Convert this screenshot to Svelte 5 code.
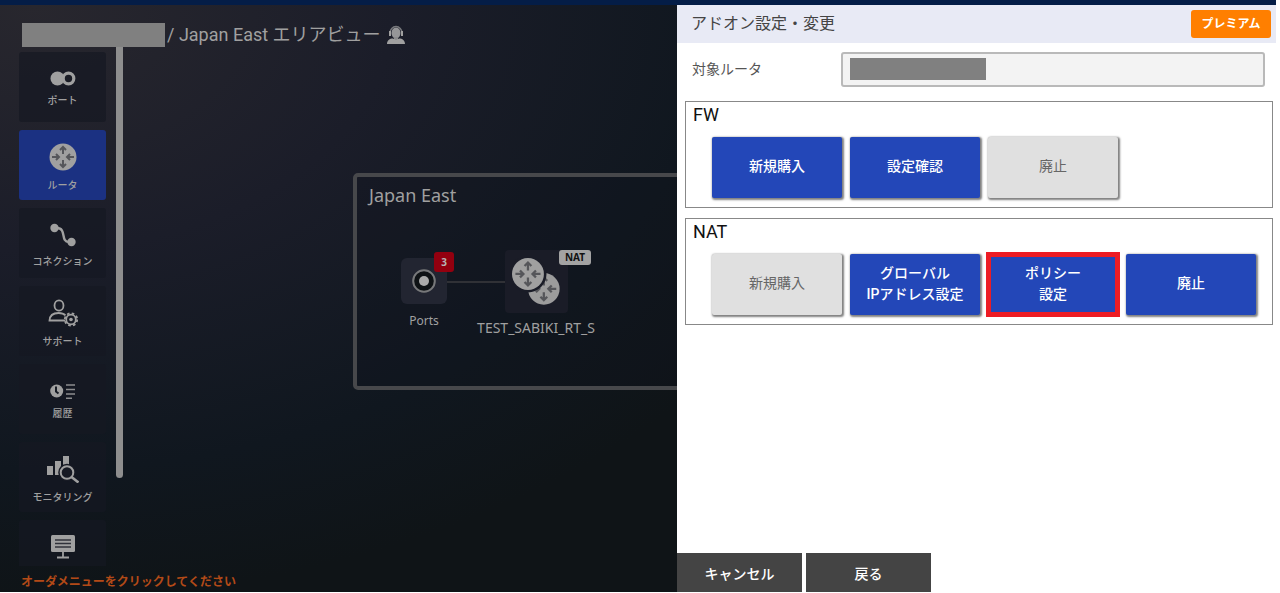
<script>
  let active = $state('router');

  const menu = [
    { id: 'port', label: 'ポート' },
    { id: 'router', label: 'ルータ' },
    { id: 'connection', label: 'コネクション' },
    { id: 'support', label: 'サポート' },
    { id: 'history', label: '履歴' },
    { id: 'monitoring', label: 'モニタリング' },
    { id: 'board', label: '' }
  ];

  const groups = [
    {
      name: 'FW',
      buttons: [
        { lines: ['新規購入'] },
        { lines: ['設定確認'] },
        { lines: ['廃止'], disabled: true }
      ]
    },
    {
      name: 'NAT',
      buttons: [
        { lines: ['新規購入'], disabled: true },
        { lines: ['グローバル', 'IPアドレス設定'] },
        { lines: ['ポリシー', '設定'], marked: true },
        { lines: ['廃止'] }
      ]
    }
  ];
</script>

{#snippet arrows()}
  <g fill="none" stroke="#55565a" stroke-width="2">
    <path d="M14 11V4M11 7l3-3 3 3M14 17v7M11 21l3 3 3-3" />
    <path d="M3 14h7M7 11l3 3-3 3M25 14h-7M21 11l-3 3 3 3" />
  </g>
{/snippet}

{#snippet icon(id)}
  {#if id === 'port'}
    <svg width="26" height="15" viewBox="0 0 26 15">
      <circle cx="7.5" cy="7.5" r="7" fill="#a0a0a0" />
      <circle cx="18.5" cy="7.5" r="5.3" fill="#1a1c25" stroke="#a0a0a0" stroke-width="3.2" />
    </svg>
  {:else if id === 'router'}
    <svg width="28" height="28" viewBox="0 0 28 28">
      <circle cx="14" cy="14" r="13.5" fill="#a0a0a0" />
      {@render arrows()}
    </svg>
  {:else if id === 'connection'}
    <svg width="26" height="24" viewBox="0 0 26 24">
      <path d="M4 5h3c10 0 3 14 12 14h3" fill="none" stroke="#a0a0a0" stroke-width="2.4" />
      <circle cx="4.5" cy="5" r="4.2" fill="#a0a0a0" />
      <circle cx="21.5" cy="19" r="4.2" fill="#a0a0a0" />
    </svg>
  {:else if id === 'support'}
    <svg width="30" height="28" viewBox="0 0 30 28">
      <g fill="none" stroke="#a0a0a0">
        <ellipse cx="11" cy="6.5" rx="4.5" ry="5.2" stroke-width="1.8" />
        <path d="M17 21.500H1.500c.3-5 4-7.500 9-7.500 3 0 5.500.8 7 2.300" stroke-width="1.8" />
        <circle cx="23" cy="20.500" r="4.8" stroke-width="1.8" />
        <circle cx="23" cy="20.500" r="6.200" stroke-width="1.800" stroke-dasharray="2.600 2.270" />
      </g>
      <circle cx="23" cy="20.500" r="1.800" fill="#a0a0a0" />
    </svg>
  {:else if id === 'history'}
    <svg width="26" height="16" viewBox="0 0 26 16">
      <circle cx="6.7" cy="8" r="6.5" fill="#a0a0a0" />
      <path d="M6 3.500V8.500l2.500 2" fill="none" stroke="#171b24" stroke-width="2" />
      <path d="M16 2h9M16 6.500h9M16 11h9M16 15.200h6" stroke="#8c8c8e" stroke-width="1.5" />
    </svg>
  {:else if id === 'monitoring'}
    <svg width="32" height="28" viewBox="0 0 32 28">
      <path d="M0 11h6v9H0zM8 6h6v14H8zM16 1h6v9h-6z" fill="#a0a0a0" />
      <circle cx="20" cy="17.5" r="6.3" fill="#171a24" stroke="#171a24" stroke-width="5" />
      <circle cx="20" cy="17.5" r="6.3" fill="none" stroke="#a0a0a0" stroke-width="2" />
      <path d="M24.500 22l7 5.500" stroke="#a0a0a0" stroke-width="2.6" />
    </svg>
  {:else}
    <svg width="24" height="24" viewBox="0 0 24 24">
      <rect width="24" height="17" rx="1.5" fill="#a0a0a0" />
      <path d="M4 5h16M4 8.500h16M4 12h16" stroke="#30323a" stroke-width="1.6" />
      <path d="M12 17v5M6 22.500h12" stroke="#a0a0a0" stroke-width="1.8" />
    </svg>
  {/if}
{/snippet}

<div class="app">
  <div class="topbar"></div>

  <main class="map">
    <header class="title">
      <span class="masked"></span>
      <h1>/ Japan East エリアビュー</h1>
      <svg class="agent" width="18" height="20" viewBox="0 0 18 20">
        <ellipse cx="9" cy="8" rx="4.5" ry="5.5" fill="#969698" />
        <path d="M3 8a6 6.500 0 0 1 12 0" fill="none" stroke="#77787c" stroke-width="1.5" />
        <path d="M2 6h2v5H2zM14 6h2v5h-2z" fill="#a0a0a0" />
        <path d="M7 12h4v4H7z" fill="#8a8a8c" />
        <path d="M0 19c0-3.500 2.500-5.500 6-5.500l3 1.500 3-1.500c3.500 0 6 2 6 5.500z" fill="#a0a0a0" />
      </svg>
    </header>

    <div class="body">
      <nav class="menu">
        {#each menu as item (item.id)}
          <button
            class="tile"
            class:active={active === item.id}
            aria-label={item.label || null}
            onclick={() => (active = item.id)}
          >
            {@render icon(item.id)}
            <span>{item.label}</span>
          </button>
        {/each}
      </nav>
      <div class="track"><div class="thumb"></div></div>

      <div class="canvas">
        <section class="area">
          <h2>Japan East</h2>
          <div class="link"></div>

          <div class="node ports">
            <div class="box">
              <svg width="24" height="24" viewBox="0 0 24 24">
                <circle cx="12" cy="12" r="10.8" fill="#0e1215" stroke="#77787a" stroke-width="2" />
                <circle cx="12" cy="12" r="5" fill="#aaa" />
              </svg>
            </div>
            <span class="count">3</span>
            <p>Ports</p>
          </div>

          <div class="node router">
            <div class="box">
              <svg width="48" height="48" viewBox="0 0 48 48">
                <g transform="translate(16 15) scale(1.13)">
                  <circle cx="14" cy="14" r="14" fill="#9c9c9c" />
                  {@render arrows()}
                </g>
                <circle cx="16" cy="16" r="18.5" fill="#1a1c27" />
                <g transform="scale(1.14)">
                  <circle cx="14" cy="14" r="14" fill="#a0a0a0" />
                  {@render arrows()}
                </g>
              </svg>
            </div>
            <span class="tag">NAT</span>
            <p>TEST_SABIKI_RT_S</p>
          </div>
        </section>
      </div>
    </div>

    <p class="hint">オーダメニューをクリックしてください</p>
  </main>

  <aside class="panel">
    <header class="panel-head">
      <h2>アドオン設定・変更</h2>
      <span class="premium">プレミアム</span>
    </header>

    <div class="field">
      <label for="target">対象ルータ</label>
      <div class="control">
        <input id="target" type="text" readonly />
        <span class="mask"></span>
      </div>
    </div>

    {#each groups as group (group.name)}
      <section class="group">
        <h3>{group.name}</h3>
        <div class="buttons">
          {#each group.buttons as button}
            <button class="action" class:marked={button.marked} disabled={button.disabled}>
              {#each button.lines as line}
                <span>{line}</span>
              {/each}
            </button>
          {/each}
        </div>
      </section>
    {/each}

    <footer>
      <button>キャンセル</button>
      <button>戻る</button>
    </footer>
  </aside>
</div>

<style>
  :global(body) {
    margin: 0;
    background: #fff;
    font-family: Roboto, 'Noto Sans CJK JP', sans-serif;
  }

  h1,
  h2,
  h3,
  p {
    margin: 0;
    font-weight: 400;
  }

  button {
    padding: 0;
    border: none;
    font-family: inherit;
    cursor: pointer;
  }

  .app {
    box-sizing: border-box;
    display: grid;
    grid-template-columns: minmax(0, 1fr) 599px;
    grid-template-rows: 5px minmax(0, 1fr);
    height: 100vh;
    padding: 0 4px 1px 0;
  }

  .topbar {
    grid-column: 1 / -1;
    background: #041d47;
  }

  /* left side: area map */
  .map {
    display: flex;
    flex-direction: column;
    overflow: hidden;
    background: radial-gradient(ellipse 140% 110% at 5% 0%, #28272e 0%, #1b1d29 38%, #10171f 72%, #0f1417 92%);
    color: #a0a0a0;
  }

  .title {
    display: flex;
    align-items: center;
    height: 24px;
    padding: 18px 0 0 22px;
  }

  .title h1 {
    margin: 0 6px 0 2px;
    font-size: 18px;
    line-height: 24px;
    white-space: nowrap;
  }

  .masked {
    width: 143px;
    height: 24px;
    background: #808080;
  }

  .body {
    display: flex;
    flex: 1;
    min-height: 0;
  }

  .menu {
    display: flex;
    flex-direction: column;
    gap: 8px;
    width: 87px;
    padding: 5px 10px 0 19px;
    overflow: hidden;
  }

  .tile {
    box-sizing: border-box;
    display: flex;
    flex: 0 0 70px;
    flex-direction: column;
    align-items: center;
    justify-content: center;
    gap: 8px;
    padding-top: 5px;
    border-radius: 3px;
    background: rgba(22, 24, 34, 0.7);
    color: #a0a0a0;
    font-size: 10px;
    font-weight: 500;
    line-height: 14px;
  }

  .tile span {
    height: 14px;
  }

  .tile.active {
    background: #1b3182;
  }

  .track {
    width: 7px;
  }

  .thumb {
    height: 83%;
    border-radius: 0 0 4px 4px;
    background: #8e8e8e;
  }

  .canvas {
    position: relative;
    flex: 1;
    overflow: hidden;
  }

  .area {
    position: absolute;
    top: 126px;
    left: 230px;
    width: 600px;
    height: 209px;
    border: 4px solid #47484b;
    border-radius: 5px;
    background: rgba(18, 21, 30, 0.3);
  }

  .area h2 {
    padding: 6px 12px;
    font-family: 'Noto Sans', sans-serif;
    font-size: 18px;
    line-height: 24px;
  }

  .link {
    position: absolute;
    top: 104px;
    left: 78px;
    width: 80px;
    height: 2px;
    background: #303136;
  }

  .node {
    position: absolute;
    display: flex;
    flex-direction: column;
    align-items: center;
    gap: 8px;
    width: 140px;
    font-family: 'Noto Sans', sans-serif;
    line-height: 18px;
  }

  .ports {
    top: 81px;
    left: -3px;
    font-size: 12px;
  }

  .router {
    top: 73px;
    left: 109px;
    gap: 6px;
    font-size: 14px;
  }

  .box {
    display: flex;
    align-items: center;
    justify-content: center;
    width: 46px;
    height: 46px;
    border-radius: 6px;
    background: #222531;
  }

  .router .box {
    width: 63px;
    height: 63px;
    border-radius: 4px;
    background: #1a1c27;
  }

  .count,
  .tag {
    position: absolute;
    border-radius: 3px;
    font-size: 10px;
    font-weight: 700;
    text-align: center;
  }

  .count {
    top: -6px;
    left: 80px;
    width: 20px;
    height: 20px;
    background: #93000f;
    color: #b5b5b5;
    line-height: 20px;
  }

  .tag {
    top: 0;
    left: 93px;
    width: 32px;
    height: 15px;
    background: #a3a3a3;
    color: #111;
    line-height: 15px;
  }

  .hint {
    padding: 7px 21px 1px;
    color: #b34a17;
    font-size: 12px;
    font-weight: 700;
    line-height: 18px;
  }

  /* right side: add-on panel */
  .panel {
    display: flex;
    flex-direction: column;
    background: #fff;
  }

  .panel-head {
    display: flex;
    align-items: center;
    justify-content: space-between;
    height: 38px;
    padding: 0 5px 0 14px;
    background: #e8eaf5;
  }

  .panel-head h2 {
    color: #444;
    font-size: 16px;
    line-height: 24px;
  }

  .premium {
    width: 80px;
    border-radius: 3px;
    background: #ff7f00;
    color: #fff;
    font-size: 12px;
    font-weight: 700;
    line-height: 28px;
    text-align: center;
  }

  .field {
    display: flex;
    align-items: center;
    margin: 9px 11px 14px 15px;
  }

  .field label {
    width: 149px;
    color: #555;
    font-size: 14px;
    line-height: 20px;
    padding-bottom: 2px;
  }

  .control {
    position: relative;
    display: flex;
    flex: 1;
  }

  .control input {
    box-sizing: border-box;
    width: 100%;
    height: 35px;
    padding: 0 8px;
    border: 2px solid #b9b9b9;
    border-radius: 3px;
    background: #f3f3f3;
    outline: none;
  }

  .mask {
    position: absolute;
    top: 6px;
    left: 9px;
    width: 136px;
    height: 22px;
    background: #808080;
  }

  .group {
    margin: 0 3px 10px 8px;
    padding-bottom: 9px;
    border: 1px solid #888;
  }

  .group h3 {
    padding: 0 7px;
    color: #111;
    font-size: 18px;
    line-height: 26px;
  }

  .buttons {
    display: flex;
    gap: 8px;
    padding: 9px 14px 0 26px;
  }

  .action {
    display: flex;
    flex-direction: column;
    align-items: center;
    justify-content: center;
    width: 130px;
    height: 61px;
    padding-bottom: 2px;
    border-radius: 2px;
    background: #2347b8;
    box-shadow: 1px 1px 2px 1px rgba(0, 0, 0, 0.5);
    color: #fff;
    font-size: 14px;
    font-weight: 500;
    line-height: 21px;
  }

  .action:disabled {
    background: #e0e0e0;
    color: #666;
    font-weight: 400;
    cursor: default;
  }

  .action.marked {
    border-radius: 0;
    box-shadow: none;
    outline: 5px solid #ed1c24;
    outline-offset: -3px;
  }

  footer {
    display: flex;
    gap: 4px;
    margin-top: auto;
  }

  footer button {
    width: 125px;
    height: 39px;
    background: #444;
    color: #fff;
    font-size: 14px;
    font-weight: 500;
  }
</style>
